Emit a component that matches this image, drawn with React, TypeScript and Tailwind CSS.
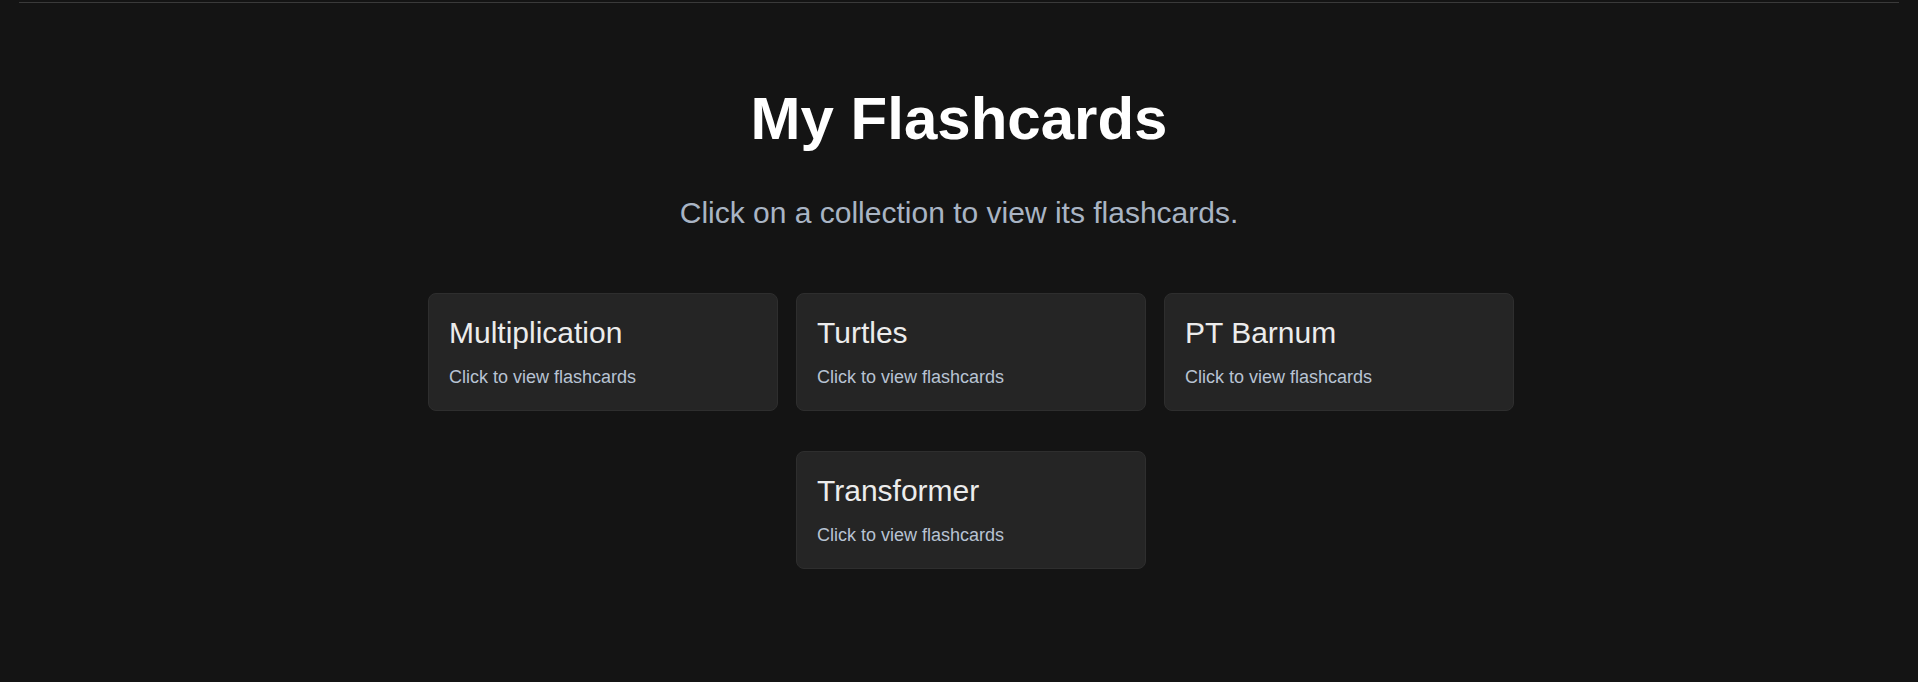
const collections = ["Multiplication", "Turtles", "PT Barnum", "Transformer"];

const App = () => {
  return (
    <div
      className="min-h-screen h-[682px] bg-[#141414] text-white"
      style={{ fontFamily: '"Liberation Sans", Arial, sans-serif' }}
    >
      <div className="mx-[19px] pt-[2px]">
        <div className="h-px bg-[#3a3a3a]" />
      </div>

      <main className="text-center">
        <h1 className="mt-[81px] text-[60px] leading-[69px] font-bold text-white">My Flashcards</h1>
        <p className="mt-[43px] text-[30px] leading-[34px] text-[#a9b4c4]">
          Click on a collection to view its flashcards.
        </p>

        <div className="mt-[63px] flex justify-center pl-[24px]">
          <div className="w-[1086px] flex flex-wrap justify-center gap-x-[18px] gap-y-[40px]">
            {collections.map((name) => (
              <div
                key={name}
                className="w-[350px] h-[118px] rounded-lg border border-[#2e2e2e] bg-[#252525] px-[20px] pt-[22px] pb-[22px] text-left cursor-pointer"
              >
                <h3 className="text-[30px] leading-[34px] text-[#ececec]">{name}</h3>
                <p className="mt-[17px] text-[18px] leading-[21px] text-[#b8c3d3]">Click to view flashcards</p>
              </div>
            ))}
          </div>
        </div>
      </main>
    </div>
  );
};

export default App;
